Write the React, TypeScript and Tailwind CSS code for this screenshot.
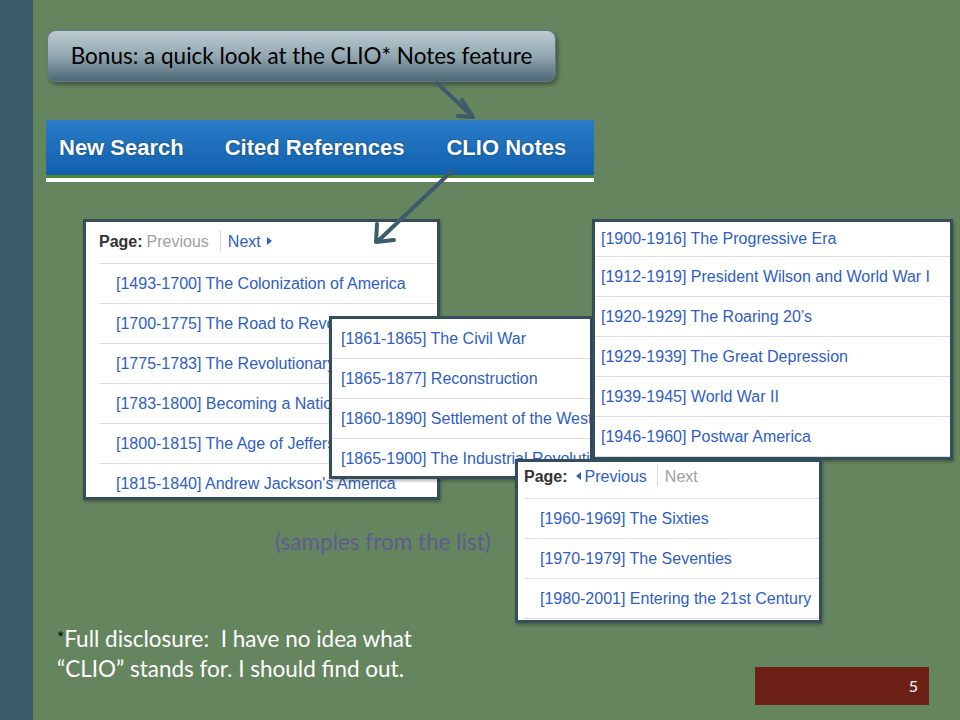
import React from "react";

const LIST_FONT = { fontFamily: '"Liberation Sans", Arial, sans-serif' };
const SLIDE_FONT = { fontFamily: 'Lato, "Open Sans", sans-serif' };

function Row({ text, pl, h = "h-10" }: { text: string; pl: string; h?: string }) {
  return (
    <div className={`${h} shrink-0 border-b border-[#dedede] flex items-center`}>
      <span className={`${pl} text-[16px] text-[#2f5ec4] whitespace-nowrap`}>{text}</span>
    </div>
  );
}

export default function App() {
  return (
    <div className="w-[960px] h-[720px] bg-[#65855f] flex overflow-hidden">
      <div className="w-[33px] h-full bg-[#3b5a69] shrink-0" />
      <div className="relative flex-1 h-full">
        {/* Bubble */}
        <div
          className="absolute left-[14px] top-[30px] w-[509px] h-[52px] rounded-[9px] border border-[#5e7a88] bg-gradient-to-b from-[#bccbd1] via-[#93a8b2] to-[#4c6876] shadow-[2px_3px_4px_rgba(0,0,0,0.35)] flex items-center justify-center"
          style={SLIDE_FONT}
        >
          <span className="text-[22.5px] text-black">
            Bonus: a quick look at the CLIO* Notes feature
          </span>
        </div>

        {/* Nav bar */}
        <div className="absolute left-[13px] top-[120px] w-[548px] flex flex-col" style={LIST_FONT}>
          <div className="h-[55px] bg-gradient-to-b from-[#2a7cc7] to-[#0f60ae] flex items-center">
            <span className="ml-[13px] text-[22px] font-bold text-white [text-shadow:0_0_2px_rgba(0,0,0,0.45)]">New Search</span>
            <span className="ml-[41px] text-[22px] font-bold text-white [text-shadow:0_0_2px_rgba(0,0,0,0.45)]">Cited References</span>
            <span className="ml-[42px] text-[22px] font-bold text-white [text-shadow:0_0_2px_rgba(0,0,0,0.45)]">CLIO Notes</span>
          </div>
          <div className="h-[3px] bg-[#4d8a27]" />
          <div className="h-[4px] bg-white" />
        </div>

        {/* Panel 1 */}
        <div
          className="absolute left-[50px] top-[219px] w-[357px] h-[281px] bg-white border-[3px] border-[#344e5b] overflow-hidden flex flex-col shadow-[1px_2px_3px_rgba(0,0,0,0.3)]"
          style={LIST_FONT}
        >
          <div className="ml-[13px] h-[42px] shrink-0 border-b border-[#dedede] flex items-start pt-[8px] text-[16px]">
            <span className="font-bold text-[#333]">Page:</span>
            <span className="ml-[4px] text-[#a0a0a0]">Previous</span>
            <span className="ml-[11px] w-px h-[21px] bg-[#d8d8d8]" />
            <span className="ml-[7px] text-[#2f5ec4]">Next</span>
            <span className="ml-[6px] mt-[7px] w-0 h-0 border-y-[4px] border-y-transparent border-l-[5px] border-l-[#2f5ec4]" />
          </div>
          <div className="ml-[13px] flex flex-col">
            <Row pl="pl-[17px]" text="[1493-1700] The Colonization of America" />
            <Row pl="pl-[17px]" text="[1700-1775] The Road to Revolution" />
            <Row pl="pl-[17px]" text="[1775-1783] The Revolutionary War" />
            <Row pl="pl-[17px]" text="[1783-1800] Becoming a Nation" />
            <Row pl="pl-[17px]" text="[1800-1815] The Age of Jefferson" />
            <Row pl="pl-[17px]" text="[1815-1840] Andrew Jackson's America" />
          </div>
        </div>

        {/* Panel 2 */}
        <div
          className="absolute left-[296px] top-[316px] w-[264px] h-[163px] bg-white border-[3px] border-[#344e5b] overflow-hidden flex flex-col shadow-[1px_2px_3px_rgba(0,0,0,0.3)]"
          style={LIST_FONT}
        >
          <Row h="h-[40px]" pl="pl-[9px]" text="[1861-1865] The Civil War" />
          <Row pl="pl-[9px]" text="[1865-1877] Reconstruction" />
          <Row pl="pl-[9px]" text="[1860-1890] Settlement of the West" />
          <Row pl="pl-[9px]" text="[1865-1900] The Industrial Revolution" />
        </div>

        {/* Panel 3 */}
        <div
          className="absolute left-[559px] top-[219px] w-[361px] h-[241px] bg-white border-[3px] border-[#344e5b] overflow-hidden flex flex-col shadow-[1px_2px_3px_rgba(0,0,0,0.3)]"
          style={LIST_FONT}
        >
          <Row h="h-[35px]" pl="pl-[6px]" text="[1900-1916] The Progressive Era" />
          <Row pl="pl-[6px]" text="[1912-1919] President Wilson and World War I" />
          <Row pl="pl-[6px]" text="[1920-1929] The Roaring 20’s" />
          <Row pl="pl-[6px]" text="[1929-1939] The Great Depression" />
          <Row pl="pl-[6px]" text="[1939-1945] World War II" />
          <Row pl="pl-[6px]" text="[1946-1960] Postwar America" />
        </div>

        {/* Panel 4 */}
        <div
          className="absolute left-[482px] top-[459px] w-[307px] h-[164px] bg-white border-[3px] border-[#344e5b] overflow-hidden flex flex-col shadow-[1px_2px_3px_rgba(0,0,0,0.3)]"
          style={LIST_FONT}
        >
          <div className="ml-[6px] h-[37px] shrink-0 border-b border-[#dedede] flex items-start pt-[3px] text-[16px]">
            <span className="font-bold text-[#333]">Page:</span>
            <span className="ml-[8px] mt-[7px] w-0 h-0 border-y-[4px] border-y-transparent border-r-[5px] border-r-[#2f5ec4]" />
            <span className="ml-[4px] text-[#2f5ec4]">Previous</span>
            <span className="ml-[10px] w-px h-[21px] bg-[#d8d8d8]" />
            <span className="ml-[7px] text-[#a0a0a0]">Next</span>
          </div>
          <div className="ml-[6px] flex flex-col">
            <Row pl="pl-[16px]" text="[1960-1969] The Sixties" />
            <Row pl="pl-[16px]" text="[1970-1979] The Seventies" />
            <Row pl="pl-[16px]" text="[1980-2001] Entering the 21st Century" />
          </div>
        </div>

        {/* Arrows */}
        <svg className="absolute left-0 top-0 pointer-events-none" width="927" height="720" viewBox="33 0 927 720">
          <g stroke="#3d5b6b" strokeWidth="4" fill="none" strokeLinecap="round" strokeLinejoin="round">
            <line x1="437" y1="83" x2="472" y2="116" />
            <polyline points="462,100 473,117 458,116" />
            <line x1="452" y1="171" x2="378" y2="241" />
            <polyline points="377,224 376,242 394,240" />
          </g>
        </svg>

        {/* Caption */}
        <div className="absolute left-[242px] top-[525px] text-[22.5px] text-[#5e5b8e]" style={SLIDE_FONT}>
          (samples from the list)
        </div>

        {/* Footnote */}
        <div className="absolute left-[24px] top-[625px] text-[22.5px] leading-[28px] text-white" style={SLIDE_FONT}>
          <div>
            <span className="text-black text-[17px] relative top-[-3px]">*</span>Full disclosure:&nbsp; I have no idea what
          </div>
          <div>“CLIO” stands for. I should find out.</div>
        </div>

        {/* Page number */}
        <div className="absolute left-[722px] top-[667px] w-[174px] h-[38px] bg-[#6d2015] flex items-center justify-end pr-[11px]">
          <span className="text-[16px] text-white" style={SLIDE_FONT}>5</span>
        </div>
      </div>
    </div>
  );
}
